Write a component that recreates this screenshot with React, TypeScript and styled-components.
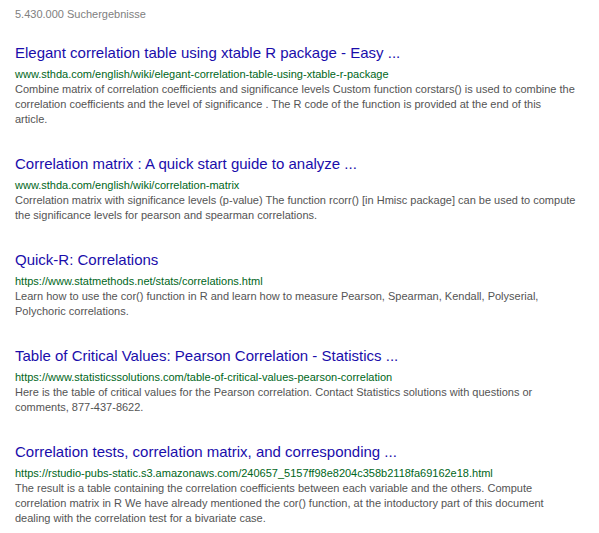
import React from "react"
import styled, { createGlobalStyle } from "styled-components"

type Result = {
  title: string
  url: string
  snippet: string
}

// snippet line breaks follow the reference wrapping
const results: Result[] = [
  {
    title: "Elegant correlation table using xtable R package - Easy ...",
    url: "www.sthda.com/english/wiki/elegant-correlation-table-using-xtable-r-package",
    snippet:
      "Combine matrix of correlation coefficients and significance levels Custom function corstars() is used to combine the\ncorrelation coefficients and the level of significance . The R code of the function is provided at the end of this\narticle.",
  },
  {
    title: "Correlation matrix : A quick start guide to analyze ...",
    url: "www.sthda.com/english/wiki/correlation-matrix",
    snippet:
      "Correlation matrix with significance levels (p-value) The function rcorr() [in Hmisc package] can be used to compute\nthe significance levels for pearson and spearman correlations.",
  },
  {
    title: "Quick-R: Correlations",
    url: "https://www.statmethods.net/stats/correlations.html",
    snippet:
      "Learn how to use the cor() function in R and learn how to measure Pearson, Spearman, Kendall, Polyserial,\nPolychoric correlations.",
  },
  {
    title: "Table of Critical Values: Pearson Correlation - Statistics ...",
    url: "https://www.statisticssolutions.com/table-of-critical-values-pearson-correlation",
    snippet:
      "Here is the table of critical values for the Pearson correlation. Contact Statistics solutions with questions or\ncomments, 877-437-8622.",
  },
  {
    title: "Correlation tests, correlation matrix, and corresponding ...",
    url: "https://rstudio-pubs-static.s3.amazonaws.com/240657_5157ff98e8204c358b2118fa69162e18.html",
    snippet:
      "The result is a table containing the correlation coefficients between each variable and the others. Compute\ncorrelation matrix in R We have already mentioned the cor() function, at the intoductory part of this document\ndealing with the correlation test for a bivariate case.",
  },
]

const App = () => {
  return (
    <>
      <GlobalStyle />
      <Page>
        <ResultCount>5.430.000 Suchergebnisse</ResultCount>
        <ResultList>
          {results.map(r => (
            <ResultItem key={r.url}>
              <Title href="#">{r.title}</Title>
              <Url>{r.url}</Url>
              <Snippet>{r.snippet}</Snippet>
            </ResultItem>
          ))}
        </ResultList>
      </Page>
    </>
  )
}

const GlobalStyle = createGlobalStyle`
  html, body {
    margin: 0;
    background: #ffffff;
  }
  body {
    font-family: "Liberation Sans", Arial, sans-serif;
  }
`

const Page = styled.div`
  width: 570px;
  padding: 7px 0 0 15px;
`

const ResultCount = styled.div`
  font-size: 11px;
  line-height: 15px;
  color: #808080;
`

const ResultList = styled.div`
  display: flex;
  flex-direction: column;
  gap: 27px;
  margin-top: 21px;
`

const ResultItem = styled.div`
  display: flex;
  flex-direction: column;
`

const Title = styled.a`
  font-size: 15px;
  line-height: 20px;
  color: #1a0dab;
  text-decoration: none;
`

const Url = styled.div`
  font-size: 11px;
  line-height: 16px;
  margin-top: 3px;
  color: #006621;
  white-space: nowrap;
`

const Snippet = styled.div`
  font-size: 11px;
  line-height: 15px;
  color: #545454;
  white-space: pre-line;
`

export default App
